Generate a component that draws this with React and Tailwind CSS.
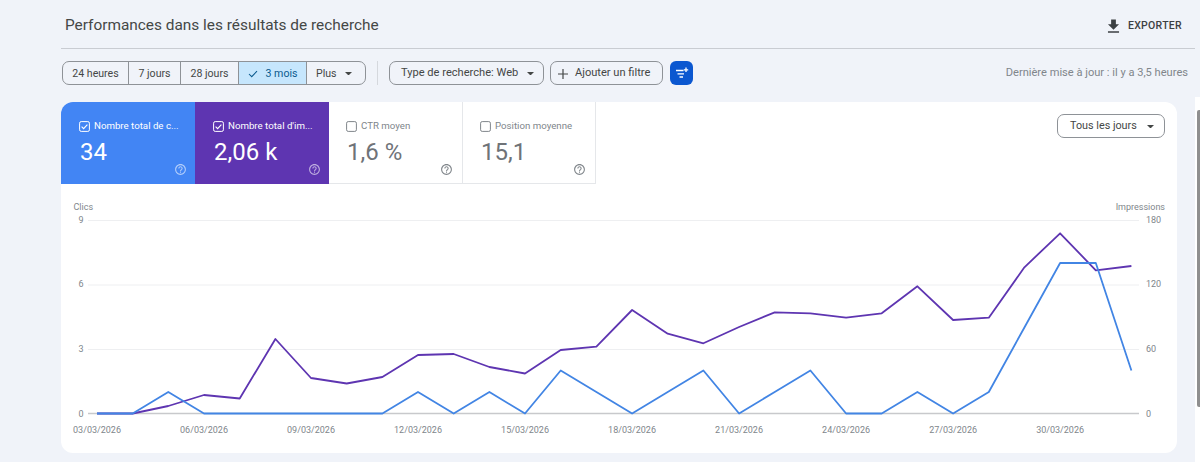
import React from "react";

const DAY = (i) => 97 + i * 35.67;
const CLICS = [0,0,1,0,0,0,0,0,0,1,0,1,0,2,1,0,1,2,0,1,2,0,0,1,0,1,4,7,7,2];
const IMPR = [413.5,413.5,406,395,398.5,339,378,383.5,377,355,354,367,373.5,350,346.7,310,333.7,343.3,327,312.3,313.3,317.7,313.3,286.3,320,317.7,267.3,233.3,270.3,266];
const clicsPts = CLICS.map((v, i) => `${DAY(i).toFixed(1)},${(413.5 - v * 21.5).toFixed(1)}`).join(" ");
const imprPts = IMPR.map((y, i) => `${DAY(i).toFixed(1)},${y}`).join(" ");
const DATES = ["03/03/2026","06/03/2026","09/03/2026","12/03/2026","15/03/2026","18/03/2026","21/03/2026","24/03/2026","27/03/2026","30/03/2026"];
const GRID = [
  { y: 220.5, l: "9", r: "180" },
  { y: 285, l: "6", r: "120" },
  { y: 349.5, l: "3", r: "60" },
];

function Caret({ className }) {
  return (
    <svg viewBox="0 0 8 4" className={`shrink-0 ${className}`} fill="currentColor">
      <path d="M0 0h8L4 4z" />
    </svg>
  );
}

function Help({ className }) {
  return (
    <svg viewBox="0 0 24 24" className={className} fill="currentColor">
      <path d="M11 18h2v-2h-2v2zm1-16C6.48 2 2 6.48 2 12s4.48 10 10 10 10-4.48 10-10S17.52 2 12 2zm0 18c-4.41 0-8-3.59-8-8s3.59-8 8-8 8 3.59 8 8-3.59 8-8 8zm0-14c-2.21 0-4 1.79-4 4h2c0-1.1.9-2 2-2s2 .9 2 2c0 2-3 1.75-3 5h2c0-2.25 3-2.5 3-5 0-2.21-1.79-4-4-4z" />
    </svg>
  );
}

function Check({ checked }) {
  return (
    <svg viewBox="0 0 11 11" className="w-[11px] h-[11px] shrink-0 mt-[1px]" fill="none" stroke="currentColor">
      <rect x="0.6" y="0.6" width="9.8" height="9.8" rx="1.6" strokeWidth="1" />
      {checked && <path d="M2.6 5.6l2 2 3.8-4" strokeWidth="1.1" />}
    </svg>
  );
}

function Tile({ label, value, checked, className, labelClass, helpClass }) {
  return (
    <div className={`h-[82px] flex flex-col pt-[18px] ${className}`}>
      <div className={`flex items-center gap-[4px] h-[12px] text-[9.7px] leading-[12px] whitespace-nowrap ${labelClass}`}>
        <Check checked={checked} />
        <span>{label}</span>
      </div>
      <div className="text-[24px] leading-[30px] mt-[5px] ml-[1px] whitespace-nowrap">{value}</div>
      <div className="flex justify-end mt-[-4.5px]">
        <Help className={`w-[13px] h-[13px] ${helpClass}`} />
      </div>
    </div>
  );
}

const seg = "h-full flex items-center border-r border-[#8e9297] justify-center pt-px";

export default function App() {
  return (
    <div className="w-[1200px] h-[462px] overflow-hidden flex bg-[#f0f3f9] text-[#444746] font-['Roboto',sans-serif]">
      <div className="w-[1195px] shrink-0 flex flex-col pl-[61px]">
        <header className="h-[49px] flex items-center border-b border-[#c9ccd2] pt-[4px] pr-[13px]">
          <h1 className="pl-[4px] text-[15.4px] font-normal text-[#444746]">Performances dans les résultats de recherche</h1>
          <div className="ml-auto flex items-center gap-[5px] text-[#3c4043]">
            <svg viewBox="0 0 24 24" className="w-[19px] h-[19px]" fill="currentColor">
              <path d="M19 9h-4V3H9v6H5l7 7 7-7zM5 18v2h14v-2H5z" />
            </svg>
            <span className="text-[10.5px] font-medium tracking-[0.3px]">EXPORTER</span>
          </div>
        </header>

        <div className="mt-[12px] h-[24px] flex items-center pl-[1px] pr-[7px] text-[11.1px] text-[#444746]">
          <div className="h-full flex rounded-[7px] border border-[#8e9297] overflow-hidden text-[10.6px]">
            <div className={`${seg} w-[66px]`}>24 heures</div>
            <div className={`${seg} w-[52px]`}>7 jours</div>
            <div className={`${seg} w-[58px]`}>28 jours</div>
            <div className={`${seg} w-[68px] gap-[8px] bg-[#c6e6fd] text-[#0b5a8e]`}>
              <svg viewBox="0 0 12 10" className="w-[10px] h-[8px]" fill="none" stroke="currentColor" strokeWidth="1.3">
                <path d="M1 5l3.4 3.4L11 1.4" />
              </svg>
              <span>3 mois</span>
            </div>
            <div className="w-[58px] h-full flex items-center pl-[9px] pt-px gap-[8px]">
              <span>Plus</span>
              <Caret className="w-[7px] h-[3.5px]" />
            </div>
          </div>
          <div className="w-px h-full bg-[#d5d8dd] ml-[11px]" />
          <div className="ml-[11px] w-[155px] h-full flex items-center pl-[11px] pt-px gap-[9px] rounded-[7px] border border-[#8e9297] whitespace-nowrap">
            <span>Type de recherche: Web</span>
            <Caret className="w-[7px] h-[3.5px]" />
          </div>
          <div className="ml-[6px] w-[113px] h-full flex items-center pl-[7px] pt-px gap-[7px] rounded-[7px] border border-[#8e9297] whitespace-nowrap">
            <svg viewBox="0 0 10 10" className="w-[10px] h-[10px]" fill="none" stroke="currentColor" strokeWidth="1.2">
              <path d="M5 0v10M0 5h10" />
            </svg>
            <span>Ajouter un filtre</span>
          </div>
          <div className="ml-[7px] w-[23px] h-full rounded-[6px] bg-[#0b57d0] flex items-center justify-center">
            <svg viewBox="0 0 14 12" className="w-[14px] h-[12px]" fill="none" stroke="#fff" strokeWidth="1.3">
              <path d="M1 3.5h7.5M2.5 6.8h6.5M4.5 10h3.5" />
              <path d="M11 0.5v4.6M8.8 2.8h4.4" />
            </svg>
          </div>
          <span className="ml-auto text-[#80868b] whitespace-nowrap">Dernière mise à jour : il y a 3,5 heures</span>
        </div>

        <section className="mt-[17px] w-[1116px] h-[351px] bg-white rounded-[12px] overflow-hidden flex flex-col">
          <div className="h-[82px] flex shrink-0">
            <Tile label="Nombre total de c..." value="34" checked className="w-[134px] pl-[18px] pr-[8px] bg-[#4285f4] text-white" labelClass="text-white" helpClass="text-white/60" />
            <Tile label="Nombre total d'im..." value="2,06 k" checked className="w-[134px] pl-[18px] pr-[8px] bg-[#5e35b1] text-white" labelClass="text-white" helpClass="text-white/60" />
            <Tile label="CTR moyen" value="1,6 %" className="w-[134px] pl-[17px] pr-[9px] border-r border-b border-[#e5e7ea] text-[#6f7378]" labelClass="text-[#80868b]" helpClass="text-[#80868b]" />
            <Tile label="Position moyenne" value="15,1" className="w-[133px] pl-[17px] pr-[9px] border-r border-b border-[#e5e7ea] text-[#6f7378]" labelClass="text-[#80868b]" helpClass="text-[#80868b]" />
            <div className="ml-auto mr-[12px] mt-[12px] w-[108px] h-[24px] flex items-center pl-[12px] pt-px gap-[10px] rounded-[7px] border border-[#8e9297] text-[10.8px] whitespace-nowrap">
              <span>Tous les jours</span>
              <Caret className="w-[7px] h-[3.5px]" />
            </div>
          </div>
          <svg viewBox="61 184 1116 269" className="w-[1116px] h-[269px] block" fontFamily="Roboto, sans-serif" fontSize="9" fill="#80868b">
            <text x="73.5" y="209.5">Clics</text>
            <text x="1165" y="209.5" textAnchor="end">Impressions</text>
            {GRID.map((g) => (
              <g key={g.l}>
                <line x1="88" x2="1139" y1={g.y} y2={g.y} stroke="#eeeff1" strokeWidth="1" />
                <text x="81" y={g.y + 2} textAnchor="middle">{g.l}</text>
                <text x="1146" y={g.y + 2}>{g.r}</text>
              </g>
            ))}
            <line x1="88" x2="1139" y1="413.5" y2="413.5" stroke="#c8c9cc" strokeWidth="1.5" />
            <text x="81" y="416.5" textAnchor="middle">0</text>
            <text x="1146" y="416.5">0</text>
            {DATES.map((d, i) => (
              <text key={d} x={DAY(i * 3)} y="432.5" textAnchor="middle">{d}</text>
            ))}
            <polyline points={imprPts} fill="none" stroke="#5e35b1" strokeWidth="1.8" strokeLinejoin="round" />
            <polyline points={clicsPts} fill="none" stroke="#4285e4" strokeWidth="1.8" strokeLinejoin="round" />
          </svg>
        </section>
      </div>
      <div className="w-[5px] shrink-0 pt-[97px] flex flex-col">
        <div className="flex-1 bg-white pt-[13px] pl-[2px]">
          <div className="h-[297px] bg-[#8f8f8f] rounded-l-[2px]" />
        </div>
      </div>
    </div>
  );
}
